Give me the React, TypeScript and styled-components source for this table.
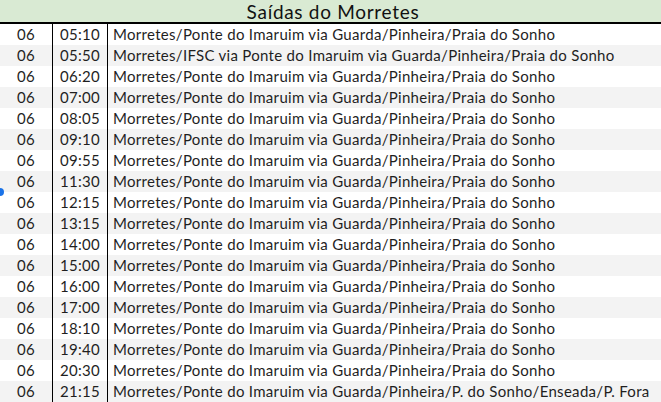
import React from "react";
import styled, { createGlobalStyle } from "styled-components";

const Global = createGlobalStyle`
  html, body { margin: 0; padding: 0; background: #ffffff; }
  body { font-family: "Lato", "Noto Sans", sans-serif; color: #1f1f1f; }
`;

const Sheet = styled.div`
  position: relative;
  width: 661px;
  height: 402px;
  overflow: hidden;
  background: #ffffff;
`;

const Header = styled.div`
  height: 22px;
  background: #d9ead3;
  border-bottom: 2px solid #000;
  display: flex;
  align-items: center;
  justify-content: center;
  padding-left: 5px;
  font-size: 19px;
  letter-spacing: 0.7px;
  color: #111;
`;

const Row = styled.div<{ $alt: boolean }>`
  display: grid;
  grid-template-columns: 53px 55px 1fr;
  height: 21px;
  background: ${(p) => (p.$alt ? "#f3f3f3" : "#ffffff")};
  font-size: 15px;
  line-height: 21px;
  letter-spacing: 0.3px;
`;

const Cell = styled.div<{ $align: "center" | "left" }>`
  text-align: ${(p) => p.$align};
  padding-left: ${(p) => (p.$align === "left" ? "5px" : "0")};
  border-right: ${(p) => (p.$align === "center" ? "1px solid #000" : "none")};
  white-space: nowrap;
  overflow: hidden;
`;

const Bottom = styled.div`
  height: 1px;
  background: #000;
`;

const Dot = styled.div`
  position: absolute;
  left: -4px;
  top: 188px;
  width: 8px;
  height: 8px;
  border-radius: 50%;
  background: #1a73e8;
`;

const main = "Morretes/Ponte do Imaruim via Guarda/Pinheira/Praia do Sonho";
const rows: [string, string][] = [
  ["05:10", main],
  ["05:50", "Morretes/IFSC via Ponte do Imaruim via Guarda/Pinheira/Praia do Sonho"],
  ["06:20", main],
  ["07:00", main],
  ["08:05", main],
  ["09:10", main],
  ["09:55", main],
  ["11:30", main],
  ["12:15", main],
  ["13:15", main],
  ["14:00", main],
  ["15:00", main],
  ["16:00", main],
  ["17:00", main],
  ["18:10", main],
  ["19:40", main],
  ["20:30", main],
  ["21:15", "Morretes/Ponte do Imaruim via Guarda/Pinheira/P. do Sonho/Enseada/P. Fora"],
];

export default function App() {
  return (
    <Sheet>
      <Global />
      <Header>Saídas do Morretes</Header>
      {rows.map(([t, r], i) => (
        <Row key={i} $alt={i % 2 === 1}>
          <Cell $align="center">06</Cell>
          <Cell $align="center">{t}</Cell>
          <Cell $align="left">{r}</Cell>
        </Row>
      ))}
      <Bottom />
      <Dot />
    </Sheet>
  );
}
